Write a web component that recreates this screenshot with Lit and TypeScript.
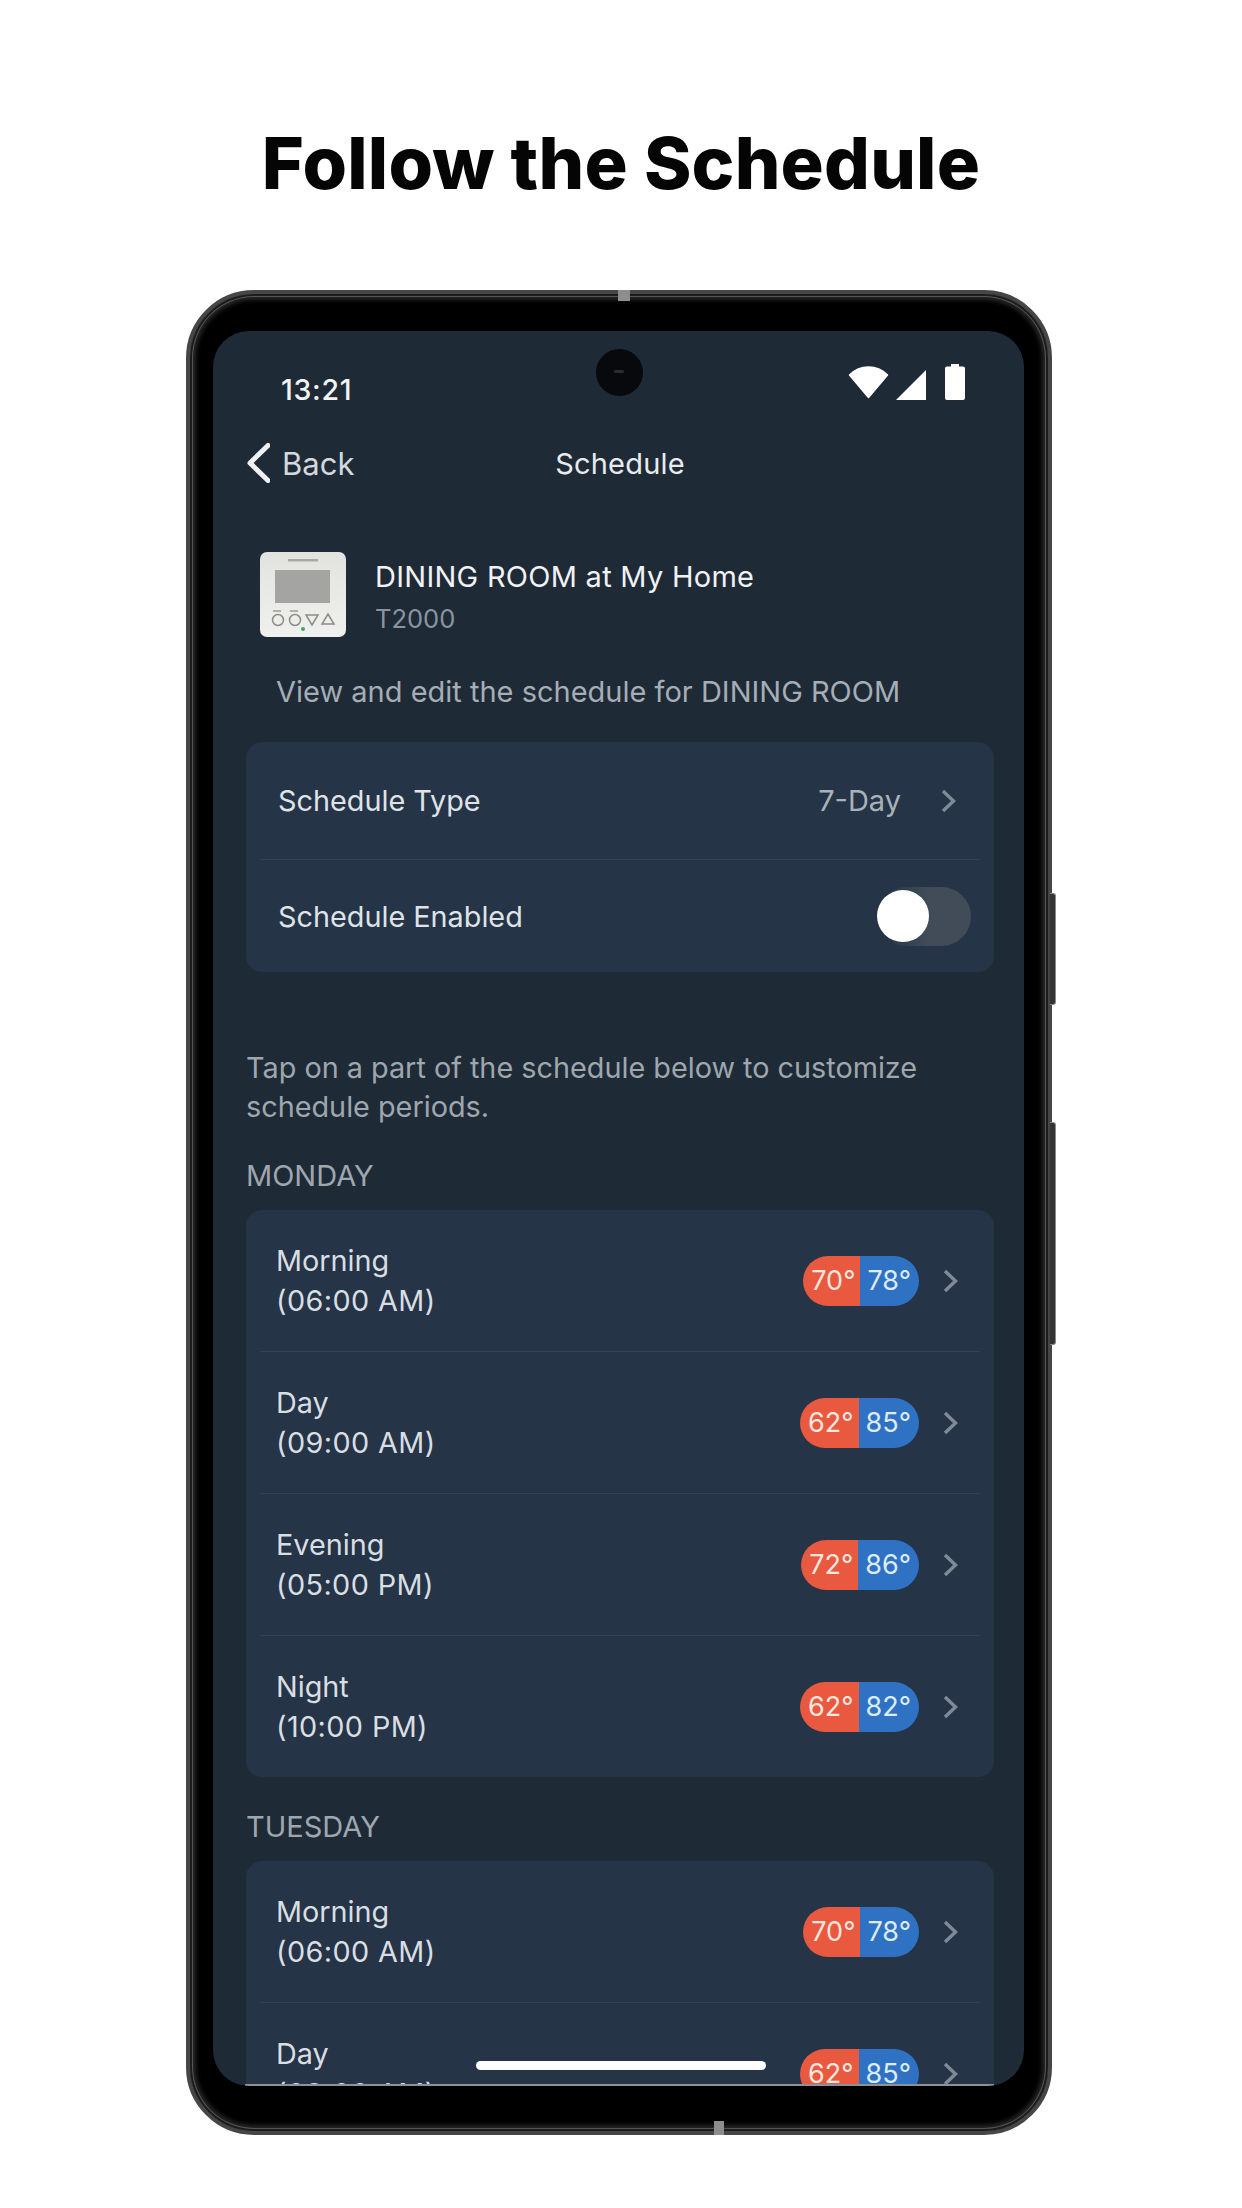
import { LitElement, html, css, svg } from "lit";
import { customElement } from "lit/decorators.js";

const chevron = html`<svg class="chev" viewBox="0 0 15 24" fill="none" stroke="#7f8a96" stroke-width="3.4"><path d="M2 2l10.5 10L2 22"/></svg>`;

interface Period { name: string; time: string; heat: number; cool: number; }
const monday: Period[] = [
  { name: "Morning", time: "(06:00 AM)", heat: 70, cool: 78 },
  { name: "Day", time: "(09:00 AM)", heat: 62, cool: 85 },
  { name: "Evening", time: "(05:00 PM)", heat: 72, cool: 86 },
  { name: "Night", time: "(10:00 PM)", heat: 62, cool: 82 },
];
const tuesday: Period[] = [monday[0], monday[1]];

@customElement("app-root")
export class AppRoot extends LitElement {
  static styles = css`
    :host { display: block; width: 1242px; height: 2208px; background: #fff; overflow: hidden; font-family: Inter, "Liberation Sans", sans-serif; }
    .title { margin: 0; height: 290px; padding-top: 122px; box-sizing: border-box; text-align: center; font-size: 72px; line-height: 82px; font-weight: 800; color: #050505; letter-spacing: 0.2px; }
    .phone { position: relative; margin-left: 186px; width: 866px; height: 1845px; box-sizing: border-box; background: #000; border-radius: 68px; border: 4px solid #464646; box-shadow: inset 0 0 0 2px #1c1c1c, inset 0 0 0 3px #555, inset 0 0 4px 6px #262626; padding: 37px 24px 45px 23px; }
    .seam { position: absolute; background: #8d8d8d; }
    .seam.top { left: 428px; top: -4px; width: 12px; height: 11px; }
    .seam.bot { left: 524px; bottom: -4px; width: 10px; height: 14px; }
    .btn { position: absolute; left: 860px; width: 6px; background: #333; border: 1px solid #8a8a8a; border-left: 0; box-sizing: border-box; border-radius: 0 3px 3px 0; }
    .btn.a { top: 599px; height: 112px; }
    .btn.b { top: 828px; height: 223px; }
    .screen { position: relative; height: 100%; background: #1f2a37; border-radius: 36px; overflow: hidden; color: #e6e9ec; padding: 0 30px 0 33px; box-sizing: border-box; }
    .cam { position: absolute; left: 383px; top: 18px; width: 47px; height: 47px; border-radius: 50%; background: #07090c; }
    .cam::after { content: ""; position: absolute; left: 18px; top: 21px; width: 10px; height: 3px; background: #2a2c30; border-radius: 2px; }
    .home { position: absolute; left: 263px; bottom: 16px; width: 290px; height: 9px; border-radius: 5px; background: #fff; }
    .edge { position: absolute; left: 32px; right: 30px; bottom: 0; height: 2px; background: #8b929a; }
    .status { height: 116px; display: flex; align-items: center; justify-content: space-between; padding: 0 29px 0 35px; }
    .time { font-size: 28.500px; font-weight: 500; color: #f1f3f5; letter-spacing: 0.7px; }
    .icons { display: flex; align-items: center; gap: 7px; padding-bottom: 14px; }
    .nav { position: relative; height: 32px; display: flex; align-items: center; justify-content: center; }
    .back { position: absolute; left: 1px; display: flex; align-items: center; gap: 12px; font-size: 31px; color: #d3d8dd; }
    .nav-title { font-size: 29px; color: #e8ebee; letter-spacing: 0.2px; }
    .device { margin: 76px 0 0 14px; height: 85px; display: flex; align-items: center; gap: 29px; }
    .device svg { width: 86px; height: 85px; flex: none; margin-top: -6px; }
    .dname { font-size: 29px; line-height: 42px; color: #f0f2f4; letter-spacing: 0.27px; }
    .dmodel { font-size: 25.500px; line-height: 42px; color: #8a949e; }
    .intro { margin: 32px 0 0 30px; font-size: 29px; line-height: 40px; color: #a5adb5; }
    .card { background: #253446; border-radius: 16px; }
    .card.first { margin-top: 30px; }
    .setting { display: flex; align-items: center; justify-content: space-between; padding: 0 38px 0 32px; font-size: 28.800px; color: #dfe3e7; }
    .setting.a { height: 117px; position: relative; }
    .setting.b { height: 112px; padding-right: 23px; }
    .value { display: flex; align-items: center; gap: 40px; color: #a9b2bb; font-size: 29px; }
    .rule { height: 1px; margin: 0 14px; background: #33424f; }
    .chev { width: 15px; height: 24px; display: block; flex: none; }
    .toggle { position: relative; width: 95px; height: 59px; border-radius: 30px; background: linear-gradient(90deg, #253446 10%, #414c58 55%); }
    .knob { position: absolute; left: 1px; top: 3px; width: 52px; height: 52px; border-radius: 50%; background: #fff; }
    .hint { margin: 76px 0 0; font-size: 28.800px; line-height: 39px; color: #9ea6ae; }
    .day { height: 30px; line-height: 30px; font-size: 29px; color: #9ea6ae; }
    .day.mon { margin-top: 35px; }
    .day.tue { margin-top: 35px; }
    .day + .card { margin-top: 19px; }
    .period { height: 141px; display: flex; align-items: center; justify-content: space-between; padding: 0 36px 0 30px; }
    .period-text { font-size: 28.800px; line-height: 40px; color: #d9dee2; }
    .time-of { letter-spacing: 0.4px; }
    .right { display: flex; align-items: center; gap: 24px; }
    .pill { display: flex; height: 50px; border-radius: 25px; overflow: hidden; font-size: 27px; line-height: 50px; }
    .pill span { display: block; }
    .heat { background: #e8593f; padding: 0 5px 0 8px; color: #f7e6df; }
    .cool { background: #2f72c4; padding: 0 8px 0 7px; color: #dcebf7; }
  `;

  private pill(p: Period) {
    return html`<div class="pill"><span class="heat">${p.heat}°</span><span class="cool">${p.cool}°</span></div>`;
  }

  private periods(list: Period[]) {
    return list.map((p, i) => html`
      ${i > 0 ? html`<div class="rule"></div>` : ""}
      <div class="period">
        <div class="period-text">${p.name}<br /><span class="time-of">${p.time}</span></div>
        <div class="right">${this.pill(p)}${chevron}</div>
      </div>`);
  }

  render() {
    return html`
      <h1 class="title">Follow the Schedule</h1>
      <div class="phone">
        <div class="seam top"></div>
        <div class="seam bot"></div>
        <div class="btn a"></div>
        <div class="btn b"></div>
        <div class="screen">
          <div class="status">
            <span class="time">13:21</span>
            <div class="icons">
              <svg width="41" height="33" viewBox="0 0 41 33"><path fill="#fff" stroke="#fff" stroke-width="1.500" stroke-linejoin="round" d="M1.500 9C6.500 4 13 1 20.500 1S34.500 4 39.500 9L20.500 31.500z"/></svg>
              <svg width="30" height="30" viewBox="0 0 30 30" style="margin-top:6px"><path fill="#fff" d="M30 0v30H0z"/></svg>
              <svg width="20" height="36" viewBox="0 0 20 36" style="margin-left:12px"><path fill="#fff" d="M6 0h8v2.500h4a2 2 0 0 1 2 2V34a2 2 0 0 1-2 2H2a2 2 0 0 1-2-2V4.500a2 2 0 0 1 2-2h4z"/></svg>
            </div>
          </div>
          <div class="nav">
            <div class="back">
              <svg width="23" height="40" viewBox="0 0 23 40" fill="none" stroke="#eef0f2" stroke-width="5" stroke-linecap="round" stroke-linejoin="round"><path d="M21 2.500L3 20l18 17.500"/></svg>
              Back
            </div>
            <span class="nav-title">Schedule</span>
          </div>
          <div class="device">
            <svg viewBox="0 0 86 85">
              <defs><linearGradient id="tg" x1="0" y1="0" x2="0" y2="1"><stop offset="0" stop-color="#e2e2df"/><stop offset="1" stop-color="#f0f0ee"/></linearGradient></defs>
              <rect x="0" y="0" width="86" height="85" rx="7" fill="url(#tg)"/>
              <rect x="28" y="7" width="30" height="2.500" fill="#a9a9a6"/>
              <rect x="15" y="18" width="55" height="33" fill="#a4a4a2"/>
              ${svg`<g fill="none" stroke="#8c8c88" stroke-width="1.500">
                <circle cx="18" cy="68" r="5.500"/><circle cx="35" cy="68" r="5.500"/>
                <path d="M46 63h12l-6 10zM62 72h12l-6-10z"/>
              </g>
              <path d="M13 59h8M30 59h8" stroke="#9a9a96" stroke-width="1.500"/>
              <circle cx="43" cy="77" r="2" fill="#47a35a"/>`}
            </svg>
            <div>
              <div class="dname">DINING ROOM at My Home</div>
              <div class="dmodel">T2000</div>
            </div>
          </div>
          <div class="intro">View and edit the schedule for DINING ROOM</div>
          <div class="card first">
            <div class="setting a">Schedule Type <div class="value">7-Day ${chevron}</div></div>
            <div class="rule"></div>
            <div class="setting b">Schedule Enabled <div class="toggle"><div class="knob"></div></div></div>
          </div>
          <p class="hint">Tap on a part of the schedule below to customize<br />schedule periods.</p>
          <div class="day mon">MONDAY</div>
          <div class="card">${this.periods(monday)}</div>
          <div class="day tue">TUESDAY</div>
          <div class="card">${this.periods(tuesday)}</div>
          <div class="cam"></div>
          <div class="home"></div>
          <div class="edge"></div>
        </div>
      </div>
    `;
  }
}
